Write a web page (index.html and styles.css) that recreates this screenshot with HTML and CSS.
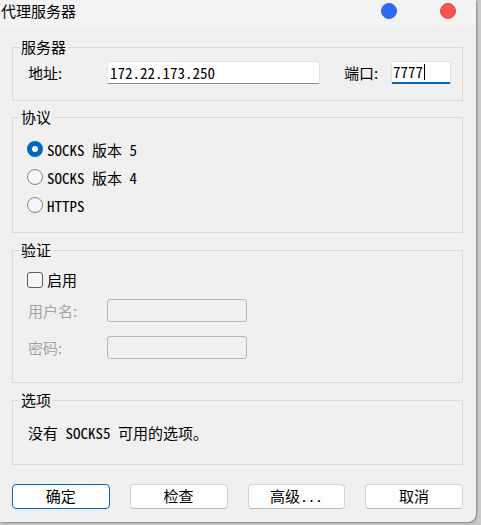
FILE: index.html
```html
<!DOCTYPE html>
<html lang="zh">
<head>
<meta charset="utf-8">
<title>代理服务器</title>
<link rel="stylesheet" href="styles.css">
</head>
<body>
<div class="window">
  <div class="titlebar">
    <span class="title">代理服务器</span>
    <span class="dot dot-blue"></span>
    <span class="dot dot-red"></span>
  </div>
  <div class="content">
    <div class="group group-server">
      <span class="legend">服务器</span>
      <div class="server-row">
        <span class="label label-addr">地址:</span>
        <div class="input input-addr"><span class="mono">172.22.173.250</span></div>
        <span class="label label-port">端口:</span>
        <div class="input input-port"><span class="mono">7777</span><span class="caret"></span></div>
      </div>
    </div>

    <div class="group group-proto">
      <span class="legend">协议</span>
      <div class="radio-row"><span class="radio checked"></span><span class="mono">SOCKS 版本 5</span></div>
      <div class="radio-row"><span class="radio"></span><span class="mono">SOCKS 版本 4</span></div>
      <div class="radio-row"><span class="radio"></span><span class="mono">HTTPS</span></div>
    </div>

    <div class="group group-auth">
      <span class="legend">验证</span>
      <div class="check-row"><span class="checkbox"></span><span class="label">启用</span></div>
      <div class="field-row row-user"><span class="label disabled">用户名:</span><div class="input input-disabled"></div></div>
      <div class="field-row row-pass"><span class="label disabled">密码:</span><div class="input input-disabled"></div></div>
    </div>

    <div class="group group-opts">
      <span class="legend">选项</span>
      <div class="opts-text mono">没有 SOCKS5 可用的选项。</div>
    </div>

    <div class="buttons">
      <div class="btn btn-primary">确定</div>
      <div class="btn">检查</div>
      <div class="btn">高级<span class="mono">...</span></div>
      <div class="btn">取消</div>
    </div>
  </div>
</div>
</body>
</html>
```
FILE: styles.css
```css
* { box-sizing: border-box; }
html, body { margin: 0; padding: 0; }
body {
  width: 481px;
  height: 525px;
  background: #c9c9c9;
  font-family: "Noto Sans CJK SC", "Noto Sans", sans-serif;
  font-size: 15px;
  color: #000;
  overflow: hidden;
}
.window {
  width: 476px;
  height: 522px;
  background: #f0f0f0;
  border-bottom-right-radius: 8px;
  box-shadow: 1px 1px 2px rgba(0,0,0,0.35);
  overflow: hidden;
}
.titlebar {
  height: 27px;
  background: #f3f3f3;
  display: flex;
  align-items: flex-start;
}
.title {
  font-size: 15px;
  line-height: 22px;
  padding-left: 1px;
  flex: 1;
}
.dot {
  width: 16px;
  height: 16px;
  border-radius: 50%;
  margin-top: 3px;
}
.dot-blue { background: #2d6cf2; border: 1px solid #2a62dc; margin-right: 43px; }
.dot-red { background: #f65454; border: 1px solid #e04848; margin-right: 20px; }

.content {
  padding-left: 12px;
  width: 463px;
}
.group {
  position: relative;
  border: 1px solid #dadada;
}
.legend {
  position: absolute;
  top: -11px;
  left: 6px;
  padding: 0 2px;
  background: #f0f0f0;
  line-height: 20px;
  font-size: 15px;
}
.mono {
  font-family: "Noto Sans Mono CJK SC", "Liberation Mono", "Noto Sans CJK SC", monospace;
  font-size: 15px;
}
.label { line-height: 20px; }
.disabled { color: #a3a3a3; }

.group-server { margin-top: 20px; height: 54px; padding: 13px 0 0 15px; }
.server-row { display: flex; align-items: center; height: 23px; }
.label-addr { width: 79px; }
.input {
  height: 23px;
  background: #fff;
  border: 1px solid #e3e3e3;
  border-bottom-color: #8b8b8b;
  border-radius: 2px;
  display: flex;
  align-items: center;
  padding-left: 2px;
  line-height: 20px;
}
.input-addr { width: 213px; }
.label-port { margin-left: 24px; width: 47px; }
.input-port {
  width: 60px;
  border-bottom: 2px solid #0067c0;
  padding-left: 1px;
}
.caret {
  width: 1px;
  height: 16px;
  background: #000;
  margin-left: 1px;
}

.group-proto { margin-top: 16px; height: 116px; padding: 17px 0 0 14px; }
.radio-row { display: flex; align-items: center; height: 28px; }
.radio {
  width: 16px;
  height: 16px;
  border-radius: 50%;
  border: 1px solid #858585;
  background: #f7f7f7;
  margin-right: 4px;
  flex: none;
}
.radio.checked {
  border: 5px solid #0067c0;
  background: #fff;
}

.group-auth { margin-top: 17px; height: 133px; padding: 21px 0 0 14px; }
.check-row { display: flex; align-items: center; height: 16px; }
.checkbox {
  width: 16px;
  height: 16px;
  border: 1px solid #5c5c5c;
  border-radius: 3px;
  background: #f6f6f6;
  margin-right: 4px;
}
.field-row { display: flex; align-items: center; height: 23px; padding-left: 1px; }
.field-row .label { width: 79px; }
.row-user { margin-top: 11px; }
.row-pass { margin-top: 14px; }
.input-disabled {
  width: 140px;
  background: #f0f0f0;
  border: 1px solid #b4b4b4;
  border-radius: 3px;
}

.group-opts { margin-top: 17px; height: 65px; padding: 22px 0 0 15px; }
.opts-text { line-height: 20px; }

.buttons {
  display: flex;
  gap: 20px;
  margin-top: 19px;
}
.btn {
  width: 98px;
  height: 25px;
  background: #fdfdfd;
  border: 1px solid #d3d3d3;
  border-bottom-color: #bcbcbc;
  border-radius: 4px;
  text-align: center;
  line-height: 22px;
  font-size: 15px;
}
.btn-primary {
  border: 1px solid #0067c0;
  background: #fff;
}
```
